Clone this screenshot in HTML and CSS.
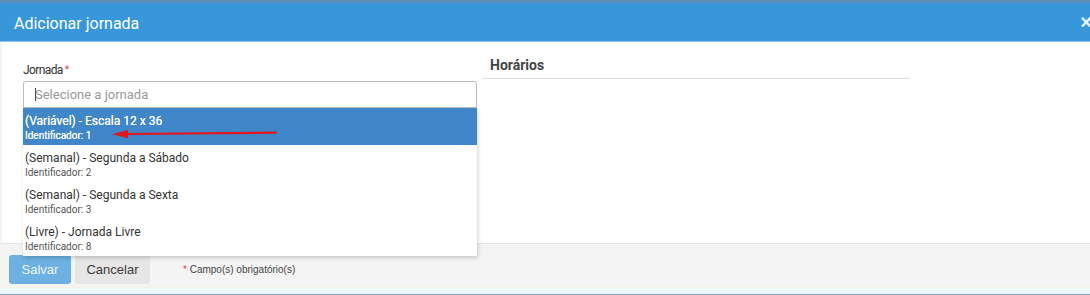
FILE: index.html
```html
<!DOCTYPE html>
<html lang="pt">
<head>
<meta charset="utf-8">
<title>Adicionar jornada</title>
<link rel="stylesheet" href="styles.css">
</head>
<body>
<div class="modal">
  <div class="modal-header">
    <span class="modal-title">Adicionar jornada</span>
    <span class="close">×</span>
  </div>
  <div class="modal-body">
    <div class="col-left">
      <label class="label">Jornada<span class="req">*</span></label>
      <div class="select">
        <div class="input"><span class="caret"></span><span class="placeholder">Selecione a jornada</span></div>
        <ul class="dropdown">
          <li class="item active">
            <div class="item-title">(Variável) - Escala 12 x 36</div>
            <div class="item-id">Identificador: 1</div>
            <svg class="arrow" width="170" height="12" viewBox="0 0 170 12">
              <path d="M16 6 L165 4.6" stroke="#e3161e" stroke-width="2.2" fill="none" stroke-linecap="round"/>
              <path d="M1 6.2 L17 2 L17 10.2 Z" fill="#e3161e"/>
            </svg>
          </li>
          <li class="item">
            <div class="item-title">(Semanal) - Segunda a Sábado</div>
            <div class="item-id">Identificador: 2</div>
          </li>
          <li class="item">
            <div class="item-title">(Semanal) - Segunda a Sexta</div>
            <div class="item-id">Identificador: 3</div>
          </li>
          <li class="item">
            <div class="item-title">(Livre) - Jornada Livre</div>
            <div class="item-id">Identificador: 8</div>
          </li>
        </ul>
      </div>
    </div>
    <div class="col-right">
      <h4 class="section-title">Horários</h4>
    </div>
  </div>
  <div class="modal-footer">
    <button class="btn btn-primary">Salvar</button>
    <button class="btn btn-default">Cancelar</button>
    <span class="note"><span class="req">*</span> Campo(s) obrigatório(s)</span>
  </div>
  <div class="modal-bottom"></div>
</div>
</body>
</html>
```

FILE: styles.css
```css
html, body {
  margin: 0;
  padding: 0;
  background: #ffffff;
  overflow: hidden;
}

.modal {
  width: 1100px;
  border-top: 3px solid #5f8fb9;
  font-family: "Liberation Sans", Arial, sans-serif;
  color: #333;
}

.modal-header {
  height: 38px;
  background: #3797da;
  border-bottom: 1px solid #8cc6ee;
  display: flex;
  align-items: center;
  justify-content: space-between;
  padding: 0 8px 0 14px;
  color: #fff;
}

.modal-title {
  font-family: Roboto, "Liberation Sans", sans-serif;
  font-size: 16px;
  position: relative;
  top: 1px;
}

.close {
  font-size: 20px;
  font-weight: bold;
  color: #e9f4fc;
  line-height: 1;
}

.modal-body {
  height: 201px;
  box-sizing: border-box;
  padding: 15px 0 0 21px;
  display: flex;
  gap: 6px;
  border-left: 2px solid #eef6fb;
}

.col-left {
  width: 454px;
  padding-top: 6px;
}

.label {
  display: block;
  font-family: Roboto, "Liberation Sans", sans-serif;
  font-size: 12px;
  line-height: 14px;
  color: #333;
  margin-bottom: 4px;
  letter-spacing: -0.6px;
}

.req {
  color: #e0453f;
  font-size: 10px;
  margin-left: 2px;
  vertical-align: 1px;
}

.select {
  position: relative;
}

.input {
  height: 27px;
  box-sizing: border-box;
  border: 1px solid #bdbdbd;
  border-radius: 3px 3px 0 0;
  display: flex;
  align-items: center;
  padding-left: 11px;
  font-family: Roboto, "Liberation Sans", sans-serif;
  font-size: 13px;
  color: #9a9a9a;
}

.caret {
  width: 1px;
  height: 13px;
  background: #444;
  margin-right: -1px;
}

.dropdown {
  position: absolute;
  left: 0;
  top: 27px;
  width: 454px;
  margin: 0;
  padding: 0;
  list-style: none;
  background: #fff;
  box-shadow: 1px 2px 4px rgba(0, 0, 0, 0.18);
  z-index: 5;
  font-family: Roboto, "Liberation Sans", sans-serif;
}

.item {
  position: relative;
  height: 37px;
  box-sizing: border-box;
  padding: 5px 2px 0 2px;
  color: #333;
}

.item.active {
  background: #3f87c9;
  color: #fff;
}

.item-title {
  font-size: 12px;
  line-height: 16px;
}

.item-id {
  font-size: 10px;
  line-height: 14px;
  color: #555;
}

.item.active .item-title,
.item.active .item-id {
  color: #fff;
  text-shadow: 0 0 0.4px #fff;
}

.arrow {
  position: absolute;
  left: 88px;
  top: 20px;
}

.col-right {
  width: 427px;
}

.section-title {
  margin: 0;
  padding: 0 0 5px 7px;
  font-family: Roboto, "Liberation Sans", sans-serif;
  font-size: 14px;
  line-height: 16px;
  font-weight: bold;
  color: #444;
  border-bottom: 1px solid #dedede;
}

.modal-footer {
  height: 44px;
  box-sizing: border-box;
  background: #f4f4f4;
  border-top: 1px solid #e6e6e6;
  display: flex;
  align-items: flex-start;
  padding: 11px 0 0 9px;
  gap: 4px;
}

.btn {
  height: 29px;
  border: none;
  border-radius: 3px;
  font-family: "Liberation Sans", Arial, sans-serif;
  font-size: 13px;
  padding: 0;
}

.btn-primary {
  width: 62px;
  background: #6cb1e1;
  color: #f2f8fd;
}

.btn-default {
  width: 75px;
  background: #e6e6e6;
  color: #3a3a3a;
}

.note {
  margin-left: 29px;
  font-size: 10px;
  line-height: 29px;
  color: #444;
}

.note .req {
  font-size: 10px;
  margin: 0;
  vertical-align: 0;
}

.modal-bottom {
  height: 6px;
  background: #eef5f7;
  border-top: 1px solid #f6f1e6;
  border-bottom: 2px solid #7ea3c3;
}
```
